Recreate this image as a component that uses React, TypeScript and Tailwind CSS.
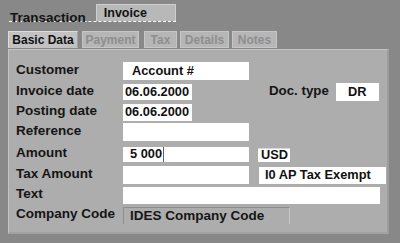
const font = { fontFamily: '"Liberation Sans", Arial, sans-serif' };

function Label({ children }: { children: string }) {
  return <div className="w-[114px] shrink-0 pl-[7px] pb-[3px] text-[13.5px] font-bold leading-none whitespace-nowrap text-[#151515]">{children}</div>;
}

function Box({ w, h, children, className = '' }: { w: string; h: string; children?: React.ReactNode; className?: string }) {
  return (
    <div className={`${w} ${h} shrink-0 bg-white flex items-center text-[12.8px] font-bold leading-none whitespace-nowrap text-[#111] ${className}`}>
      {children}
    </div>
  );
}

function Tab({ label, active, w }: { label: string; active?: boolean; w: string }) {
  return (
    <div
      className={`${w} h-[17px] flex items-center justify-center border text-[12px] font-bold leading-none whitespace-nowrap ${
        active
          ? 'bg-[#c2c2c2] border-t-[#dcdcdc] border-l-[#dcdcdc] border-r-[#a0a0a0] border-b-[#c2c2c2] text-[#121212]'
          : 'bg-[#b6b6b6] border-[#c6c6c6] text-[#8e8e8e]'
      }`}
    >
      {label}
    </div>
  );
}

export default function App() {
  return (
    <div className="w-[400px] h-[243px] bg-[#888888] overflow-hidden" style={font}>
      {/* header */}
      <div className="pt-[4px] pl-[9px] flex">
        <div className="flex items-end border-b border-dashed border-white">
          <div className="text-[13.5px] font-bold leading-none text-[#141414] pl-[1px] h-[17px] pt-[7px] whitespace-nowrap">Transaction</div>
          <div className="ml-[10px] w-[80px] h-[17px] bg-[#b8b8b8] border border-[#cfcfcf] border-b-0 text-[12.5px] font-bold leading-none text-[#121212] pl-[7px] pt-[2px]">
            Invoice
          </div>
        </div>
      </div>

      {/* tabs */}
      <div className="mt-[9px] pl-[8px] flex items-end">
        <Tab label="Basic Data" active w="w-[70px]" />
        <div className="w-[4px]" />
        <Tab label="Payment" w="w-[57px]" />
        <div className="w-[5px]" />
        <Tab label="Tax" w="w-[33px]" />
        <div className="w-[3px]" />
        <Tab label="Details" w="w-[49px]" />
        <div className="w-[3px]" />
        <Tab label="Notes" w="w-[45px]" />
      </div>

      {/* panel */}
      <div className="mt-[1px] ml-[8px] w-[381px] h-[185px] bg-[#adadad] border-t border-l border-[#c4c4c4] border-r-2 border-r-[#9c9c9c] border-b-2 border-b-[#a2a2a2] flex flex-col">
        <div className="mt-[12px] flex items-center h-[18px]">
          <Label>Customer</Label>
          <Box w="w-[126px]" h="h-[18px]" className="pl-[9px]">Account #</Box>
        </div>
        <div className="mt-[4px] flex items-center h-[16px]">
          <Label>Invoice date</Label>
          <Box w="w-[69px]" h="h-[16px]" className="pl-[2px]">06.06.2000</Box>
          <div className="ml-[77px] pb-[3px] text-[13.3px] font-bold leading-none whitespace-nowrap text-[#151515]">Doc. type</div>
          <Box w="w-[43px]" h="h-[18px]" className="ml-[7px] justify-center">DR</Box>
        </div>
        <div className="mt-[4px] flex items-center h-[17px]">
          <Label>Posting date</Label>
          <Box w="w-[69px]" h="h-[17px]" className="pl-[2px]">06.06.2000</Box>
        </div>
        <div className="mt-[2px] flex items-center h-[18px]">
          <Label>Reference</Label>
          <Box w="w-[126px]" h="h-[18px]" />
        </div>
        <div className="mt-[6px] flex items-center h-[15px]">
          <Label>Amount</Label>
          <Box w="w-[126px]" h="h-[15px]" className="pl-[7px]">
            <span>5 000</span>
            <span className="ml-[1px] w-px h-[15px] bg-[#606060]" />
          </Box>
          <Box w="w-[32px]" h="h-[14px]" className="ml-[9px] pl-[3px] border-t border-[#d8d8d8]">USD</Box>
        </div>
        <div className="mt-[4px] flex items-center h-[18px]">
          <Label>Tax Amount</Label>
          <Box w="w-[126px]" h="h-[18px]" />
          <Box w="w-[127px]" h="h-[17px]" className="ml-[10px] pl-[6px]">I0 AP Tax Exempt</Box>
        </div>
        <div className="mt-[3px] flex items-center h-[17px]">
          <Label>Text</Label>
          <Box w="w-[257px]" h="h-[17px]" />
        </div>
        <div className="mt-[3px] flex items-center h-[17px]">
          <Label>Company Code</Label>
          <div className="w-[167px] h-[17px] border-l border-t border-[#8e8e8e] border-r border-r-[#c8c8c8] flex items-center pl-[6px] text-[13.5px] font-bold leading-none whitespace-nowrap text-[#151515]">
            IDES Company Code
          </div>
        </div>
      </div>
    </div>
  );
}
